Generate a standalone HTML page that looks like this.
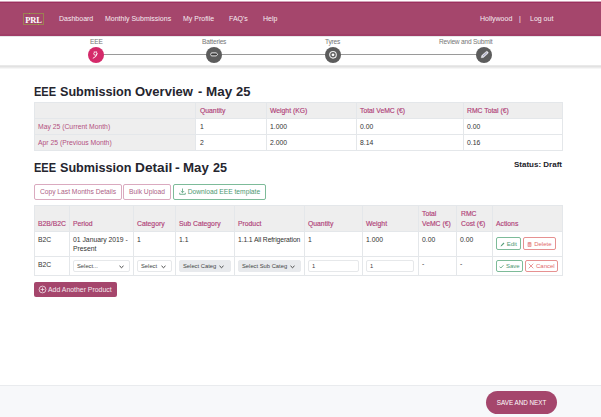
<!DOCTYPE html>
<html><head><meta charset="utf-8">
<style>
*{margin:0;padding:0;box-sizing:border-box}
html,body{width:601px;height:417px;overflow:hidden;background:#fff;font-family:"Liberation Sans",sans-serif;color:#333}
.a{position:absolute;white-space:nowrap;line-height:1}
#navtop{position:absolute;left:0;top:1px;width:601px;height:1px;background:#d3a3b7}
#nav{position:absolute;left:0;top:2px;width:601px;height:34px;background:#a5466c;border-top:1px solid #9c2f5e;border-bottom:2px solid #a03e67}
.nt{color:#f6ecf1;font-size:7px;top:15px}
#logo{position:absolute;left:23px;top:13px;width:21px;height:12px;border:1px solid rgba(150,160,70,0.65);color:#fff;font-family:"Liberation Serif",serif;font-weight:bold;font-size:8.5px;line-height:12px;text-align:center;letter-spacing:-0.2px}
#logo i{position:absolute;width:1.5px;height:1.5px;border-radius:1px;background:#9cc24a}
#navshadow{position:absolute;left:0;top:36px;width:601px;height:1px;background:#e6e8e9}
#stepbar{position:absolute;left:0;top:65px;width:601px;height:4px;background:linear-gradient(#e9e9e9 0,#e9e9e9 25%,#e2e2e2 25%,#e2e2e2 50%,#ebebeb 50%,#ebebeb 75%,#f6f6f6 75%)}
.sl{font-size:6.6px;color:#767676;top:39.4px;letter-spacing:-0.2px}
.sc{position:absolute;top:47px;width:16px;height:16px;border-radius:50%;background:#5c5c5c}
.sc svg{position:absolute;left:0;top:0}
#line{position:absolute;left:96px;top:54px;width:388px;height:1px;background:#9a9a9a}
.h1{font-size:12.5px;font-weight:bold;color:#25252e;transform-origin:0 0}
.ln{position:absolute;background:#e4e7ea}
.hb{position:absolute;background:#eeeeee}
.th{color:#b03f78;font-size:6.8px;-webkit-text-stroke:0.15px #b03f78}
.rh{color:#b4507f;font-size:6.8px}
.td{color:#333;font-size:6.8px}
.btn{position:absolute;top:184px;height:16px;border:1px solid #daaabf;border-radius:2px;color:#ad5f86;font-size:6.7px;line-height:14.4px;text-align:center;white-space:nowrap}
.sel{position:absolute;height:12px;border:1px solid #e6e8ea;border-radius:2px;background:#fff;font-size:5.8px;color:#444;line-height:10px;padding-left:3px;white-space:nowrap}
.sel.g{background:#e8eaed;border-color:#e8eaed;font-size:5.8px;color:#444}
.chev{position:absolute;top:3.5px}
.ab{position:absolute;height:12px;border-radius:2px;font-size:6px;line-height:11px;text-align:center;white-space:nowrap}
.gr{border:1px solid #7dbb99;color:#4e9872}
.rd{border:1px solid #e69191;color:#df6b6b}
#footer{position:absolute;left:0;top:385px;width:601px;height:32px;background:#f7f8fa;border-top:1px solid #e9ebee}
#save{position:absolute;left:486px;top:391px;width:71px;height:23px;border-radius:12px;background:#a5466c;color:#fff;font-size:7px;line-height:23px;text-align:center}
#add{position:absolute;left:34px;top:282px;width:83px;height:15px;border-radius:2px;background:#a5466c;color:#f4e8ee;font-size:6.9px;line-height:15px}
</style></head><body>
<div id="navtop"></div>
<div id="nav"></div>
<div id="logo">PRL<i style="left:4.5px;top:-1.5px"></i><i style="left:13.5px;top:9.5px"></i></div>
<div class="a nt" style="left:59px">Dashboard</div>
<div class="a nt" style="left:105px">Monthly Submissions</div>
<div class="a nt" style="left:183px">My Profile</div>
<div class="a nt" style="left:229px">FAQ's</div>
<div class="a nt" style="left:263px">Help</div>
<div class="a nt" style="left:480px">Hollywood</div>
<div class="a nt" style="left:519px">|</div>
<div class="a nt" style="left:530px">Log out</div>
<div id="navshadow"></div>

<div id="line"></div>
<div class="a sl" style="left:90px">EEE</div>
<div class="a sl" style="left:202px">Batteries</div>
<div class="a sl" style="left:325px">Tyres</div>
<div class="a sl" style="left:439px">Review and Submit</div>
<div class="sc" style="left:88px;background:#d42a6a"><svg width="16" height="16"><circle cx="7.4" cy="6.6" r="1.6" fill="none" stroke="#fff" stroke-width="0.9"/><path d="M9.0 6.8 Q9.0 9.8 5.2 11.2" fill="none" stroke="#fff" stroke-width="0.9" stroke-linecap="round"/><path d="M6.4 5.0 L6.2 4.4 M8.4 5.0 L8.6 4.4" stroke="#fff" stroke-width="0.7"/></svg></div>
<div class="sc" style="left:206px"><svg width="16" height="16"><path d="M5.4 5.9 H10.2 L11.8 7.4 L10.2 8.9 H5.4 Q3.9 7.4 5.4 5.9 Z" fill="#3a3a3a" stroke="#e8e8e8" stroke-width="1"/></svg></div>
<div class="sc" style="left:325px"><svg width="16" height="16"><circle cx="8" cy="7.8" r="3.3" fill="none" stroke="#eee" stroke-width="1.1"/><circle cx="8" cy="7.8" r="1.4" fill="#fff"/></svg></div>
<div class="sc" style="left:476px"><svg width="16" height="16"><g transform="translate(8.5 7.8) rotate(-42)"><path d="M-4.4 0 L-2.6 -1.3 H3.6 Q4.4 -1.3 4.4 0 Q4.4 1.3 3.6 1.3 H-2.6 Z" fill="#e4e4ec" stroke="#f2f2f2" stroke-width="0.4"/><path d="M-2.2 0 H3.2" stroke="#7a7aa0" stroke-width="0.7"/></g></svg></div>
<div id="stepbar"></div>

<!-- Overview -->
<div class="a h1" style="top:85.8px;left:34.1px;transform:scaleX(0.883)">EEE</div>
<div class="a h1" style="top:85.8px;left:59.8px;transform:scaleX(1.009)">Submission</div>
<div class="a h1" style="top:85.8px;left:135px;transform:scaleX(1.041)">Overview</div>
<div class="a h1" style="top:85.8px;left:197.9px;transform:scaleX(1.02)">-</div>
<div class="a h1" style="top:85.8px;left:205.8px;transform:scaleX(1.074)">May</div>
<div class="a h1" style="top:85.8px;left:235.8px;transform:scaleX(1.036)">25</div>
<div class="hb" style="left:34px;top:102px;width:529px;height:16px"></div>
<div class="hb" style="left:34px;top:118px;width:161px;height:32px"></div>
<div class="ln" style="left:34px;top:102px;width:529px;height:1px"></div>
<div class="ln" style="left:34px;top:118px;width:529px;height:1px"></div>
<div class="ln" style="left:34px;top:134px;width:529px;height:1px"></div>
<div class="ln" style="left:34px;top:150px;width:529px;height:1px"></div>
<div class="ln" style="left:34px;top:102px;width:1px;height:49px"></div>
<div class="ln" style="left:195px;top:102px;width:1px;height:49px"></div>
<div class="ln" style="left:266px;top:102px;width:1px;height:49px"></div>
<div class="ln" style="left:356px;top:102px;width:1px;height:49px"></div>
<div class="ln" style="left:463px;top:102px;width:1px;height:49px"></div>
<div class="ln" style="left:562px;top:102px;width:1px;height:49px"></div>
<div class="a th" style="left:200px;top:107.5px">Quantity</div>
<div class="a th" style="left:270px;top:107.5px">Weight (KG)</div>
<div class="a th" style="left:360px;top:107.5px">Total VeMC (€)</div>
<div class="a th" style="left:467px;top:107.5px">RMC Total (€)</div>
<div class="a rh" style="left:38px;top:124px">May 25 (Current Month)</div>
<div class="a rh" style="left:38px;top:140px">Apr 25 (Previous Month)</div>
<div class="a td" style="left:200px;top:124px">1</div>
<div class="a td" style="left:270px;top:124px">1.000</div>
<div class="a td" style="left:360px;top:124px">0.00</div>
<div class="a td" style="left:467px;top:124px">0.00</div>
<div class="a td" style="left:200px;top:140px">2</div>
<div class="a td" style="left:270px;top:140px">2.000</div>
<div class="a td" style="left:360px;top:140px">8.14</div>
<div class="a td" style="left:467px;top:140px">0.16</div>

<!-- Detail -->
<div class="a h1" style="top:161.8px;left:34.1px;transform:scaleX(0.883)">EEE</div>
<div class="a h1" style="top:161.8px;left:59.8px;transform:scaleX(1.009)">Submission</div>
<div class="a h1" style="top:161.8px;left:134.7px;transform:scaleX(1.094)">Detail</div>
<div class="a h1" style="top:161.8px;left:175.4px;transform:scaleX(1.15)">-</div>
<div class="a h1" style="top:161.8px;left:183.3px;transform:scaleX(1.061)">May</div>
<div class="a h1" style="top:161.8px;left:212.9px;transform:scaleX(1.007)">25</div>
<div class="a" style="left:514px;top:161.1px;font-size:8px;font-weight:bold;color:#22222a">Status: Draft</div>

<div class="btn" style="left:34px;width:88px">Copy Last Months Details</div>
<div class="btn" style="left:123px;width:48px">Bulk Upload</div>
<div class="btn gr" style="left:173px;width:93px"><svg width="7" height="7" style="vertical-align:-1px"><path d="M3.5 0.5 V4.5 M1.8 3 L3.5 4.7 L5.2 3 M0.7 4.8 V6.3 H6.3 V4.8" fill="none" stroke="#56a07a" stroke-width="0.8"/></svg> Download EEE template</div>

<div class="hb" style="left:34px;top:205px;width:529px;height:26px"></div>
<div class="ln" style="left:34px;top:205px;width:529px;height:1px"></div>
<div class="ln" style="left:34px;top:231px;width:529px;height:1px"></div>
<div class="ln" style="left:34px;top:256px;width:529px;height:1px"></div>
<div class="ln" style="left:34px;top:275px;width:529px;height:1px"></div>
<div class="ln" style="left:34px;top:205px;width:1px;height:71px"></div>
<div class="ln" style="left:69px;top:205px;width:1px;height:71px"></div>
<div class="ln" style="left:133px;top:205px;width:1px;height:71px"></div>
<div class="ln" style="left:175px;top:205px;width:1px;height:71px"></div>
<div class="ln" style="left:234px;top:205px;width:1px;height:71px"></div>
<div class="ln" style="left:304px;top:205px;width:1px;height:71px"></div>
<div class="ln" style="left:362px;top:205px;width:1px;height:71px"></div>
<div class="ln" style="left:418px;top:205px;width:1px;height:71px"></div>
<div class="ln" style="left:456px;top:205px;width:1px;height:71px"></div>
<div class="ln" style="left:492px;top:205px;width:1px;height:71px"></div>
<div class="ln" style="left:562px;top:205px;width:1px;height:71px"></div>

<div class="a th" style="left:38px;top:220.5px">B2B/B2C</div>
<div class="a th" style="left:73px;top:220.5px">Period</div>
<div class="a th" style="left:137px;top:220.5px">Category</div>
<div class="a th" style="left:179px;top:220.5px">Sub Category</div>
<div class="a th" style="left:238px;top:220.5px">Product</div>
<div class="a th" style="left:308px;top:220.5px">Quantity</div>
<div class="a th" style="left:366px;top:220.5px">Weight</div>
<div class="a th" style="left:422px;top:210.8px">Total</div>
<div class="a th" style="left:422px;top:220.5px">VeMC (€)</div>
<div class="a th" style="left:461px;top:210.8px">RMC</div>
<div class="a th" style="left:461px;top:220.5px">Cost (€)</div>
<div class="a th" style="left:496px;top:220.5px">Actions</div>

<div class="a td" style="left:38px;top:236.5px">B2C</div>
<div class="a td" style="left:73px;top:236.5px">01 January 2019 -</div>
<div class="a td" style="left:73px;top:245.7px">Present</div>
<div class="a td" style="left:137px;top:236.5px">1</div>
<div class="a td" style="left:179px;top:236.5px">1.1</div>
<div class="a td" style="left:238px;top:236.5px;letter-spacing:-0.12px">1.1.1 All Refrigeration</div>
<div class="a td" style="left:308px;top:236.5px">1</div>
<div class="a td" style="left:366px;top:236.5px">1.000</div>
<div class="a td" style="left:422px;top:236.5px">0.00</div>
<div class="a td" style="left:460px;top:236.5px">0.00</div>
<div class="a td" style="left:38px;top:261.5px">B2C</div>
<div class="a td" style="left:422px;top:260.5px">-</div>
<div class="a td" style="left:460px;top:260.5px">-</div>

<div class="sel" style="left:73px;top:260px;width:57px">Select...<svg class="chev" width="5" height="4" style="left:45px"><path d="M0.5 0.9 L2.5 2.7 L4.5 0.9" fill="none" stroke="#444" stroke-width="1"/></svg></div>
<div class="sel" style="left:137px;top:260px;width:35px">Select<svg class="chev" width="5" height="4" style="left:23px"><path d="M0.5 0.9 L2.5 2.7 L4.5 0.9" fill="none" stroke="#444" stroke-width="1"/></svg></div>
<div class="sel g" style="left:179px;top:260px;width:52px">Select Categ<svg class="chev" width="5" height="4" style="left:39px"><path d="M0.5 0.9 L2.5 2.7 L4.5 0.9" fill="none" stroke="#444" stroke-width="1"/></svg></div>
<div class="sel g" style="left:238px;top:260px;width:63px">Select Sub Categ<svg class="chev" width="5" height="4" style="left:51px"><path d="M0.5 0.9 L2.5 2.7 L4.5 0.9" fill="none" stroke="#444" stroke-width="1"/></svg></div>
<div class="sel" style="left:308px;top:260px;width:51px">1</div>
<div class="sel" style="left:366px;top:260px;width:48px">1</div>

<div class="ab gr" style="left:496px;top:237px;width:25px;height:13px;line-height:12px"><svg width="5" height="5" style="vertical-align:-0.5px"><path d="M0.6 4.4 L1 3.2 L3.6 0.6 L4.4 1.4 L1.8 4 Z" fill="#56a07a"/></svg> Edit</div>
<div class="ab rd" style="left:523px;top:237px;width:33px;height:13px;line-height:12px"><svg width="5" height="5" style="vertical-align:-0.5px"><path d="M0.4 1 H4.6 M1.6 1 V0.4 H3.4 V1 M1 1.6 H4 V4.6 H1 Z M2 2 V4.2 M3 2 V4.2" fill="none" stroke="#df6b6b" stroke-width="0.6"/></svg> Delete</div>
<div class="ab gr" style="left:496px;top:260px;width:27px"><svg width="5" height="5" style="vertical-align:-0.5px"><path d="M0.5 2.6 L1.9 4 L4.5 1.2" fill="none" stroke="#56a07a" stroke-width="0.8"/></svg> Save</div>
<div class="ab rd" style="left:525px;top:260px;width:33px"><svg width="6" height="6" style="vertical-align:-0.5px"><path d="M0.7 0.7 L5.3 5.3 M5.3 0.7 L0.7 5.3" fill="none" stroke="#df6b6b" stroke-width="0.7"/></svg> Cancel</div>

<div id="add"><svg width="9" height="9" style="position:absolute;left:4px;top:3px"><circle cx="4.5" cy="4.5" r="3.4" fill="none" stroke="#f6ecf1" stroke-width="0.75"/><path d="M4.5 2.6 V6.4 M2.6 4.5 H6.4" stroke="#f6ecf1" stroke-width="0.75"/></svg><span style="position:absolute;left:14px;top:0">Add Another Product</span></div>

<div id="footer"></div>
<div id="save"><span style="display:inline-block;transform:scaleX(0.9)">SAVE AND NEXT</span></div>
</body></html>
